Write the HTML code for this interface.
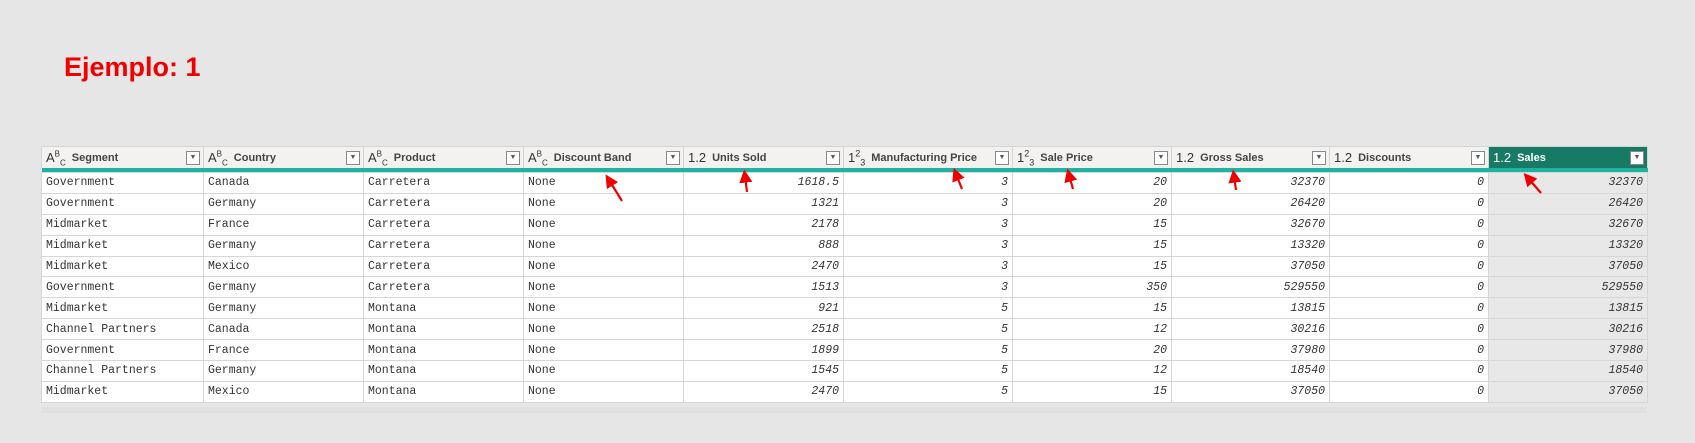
<!DOCTYPE html>
<html><head><meta charset="utf-8"><style>
body{margin:0;width:1695px;height:443px;background:#e6e6e6;position:relative;overflow:hidden;font-family:"Liberation Sans",sans-serif}
.title{position:absolute;left:64px;top:52px;font-size:27px;font-weight:bold;color:#f00000}
.tbl{position:absolute;left:41px;top:146px}
table{border-collapse:collapse;table-layout:fixed}
th{height:21px;background:#f3f2f1;border:1px solid #d4d4d4;border-bottom:none;font-size:11px;font-weight:bold;color:#444;text-align:left;padding:0 4px;white-space:nowrap;position:relative;overflow:hidden}
th .w{display:flex;align-items:center;height:21px}
th .ic{font-weight:normal;font-size:13px;color:#333;margin-right:6px;display:inline-block;line-height:13px}
th .ic sup,th .ic sub{line-height:0}
th .dd{position:absolute;right:3px;top:4px;width:12px;height:12px;border:1px solid #888;background:#fff;font-size:7px;line-height:12px;text-align:center;color:#555}
th.sel{background:#177a64;color:#fff}
th.sel .ic{color:#fff}
tr.teal td{height:4px;padding:0;background:#1eb3a0;border:none}
td{height:19.9px;line-height:19px;border:1px solid #d6d6d6;background:#fff;font-family:"Liberation Mono",monospace;font-size:11.5px;color:#333;padding:0 4px;white-space:nowrap}
td.n{text-align:right;font-style:italic}
td.g{background:#e8e8e8}
.foot{width:1606px;height:6px;background:#e0e0e0;margin-top:4px}
</style></head><body>
<div class="title">Ejemplo: 1</div>
<div class="tbl"><table>
<colgroup><col style="width:162px"><col style="width:160px"><col style="width:160px"><col style="width:160px"><col style="width:160px"><col style="width:169px"><col style="width:159px"><col style="width:158px"><col style="width:159px"><col style="width:159px"></colgroup>
<tr>
<th><div class="w"><span class="ic">A<sup style="font-size:8px">B</sup><sub style="font-size:8px">C</sub></span>Segment</div><span class="dd">▼</span></th>
<th><div class="w"><span class="ic">A<sup style="font-size:8px">B</sup><sub style="font-size:8px">C</sub></span>Country</div><span class="dd">▼</span></th>
<th><div class="w"><span class="ic">A<sup style="font-size:8px">B</sup><sub style="font-size:8px">C</sub></span>Product</div><span class="dd">▼</span></th>
<th><div class="w"><span class="ic">A<sup style="font-size:8px">B</sup><sub style="font-size:8px">C</sub></span>Discount Band</div><span class="dd">▼</span></th>
<th><div class="w"><span class="ic">1.2</span>Units Sold</div><span class="dd">▼</span></th>
<th><div class="w"><span class="ic">1<sup style="font-size:9px">2</sup><sub style="font-size:9px">3</sub></span>Manufacturing Price</div><span class="dd">▼</span></th>
<th><div class="w"><span class="ic">1<sup style="font-size:9px">2</sup><sub style="font-size:9px">3</sub></span>Sale Price</div><span class="dd">▼</span></th>
<th><div class="w"><span class="ic">1.2</span>Gross Sales</div><span class="dd">▼</span></th>
<th><div class="w"><span class="ic">1.2</span>Discounts</div><span class="dd">▼</span></th>
<th class="sel"><div class="w"><span class="ic">1.2</span>Sales</div><span class="dd">▼</span></th>
</tr>
<tr class="teal"><td colspan="10"></td></tr>
<tr><td>Government</td><td>Canada</td><td>Carretera</td><td>None</td><td class="n">1618.5</td><td class="n">3</td><td class="n">20</td><td class="n">32370</td><td class="n">0</td><td class="n g">32370</td></tr>
<tr><td>Government</td><td>Germany</td><td>Carretera</td><td>None</td><td class="n">1321</td><td class="n">3</td><td class="n">20</td><td class="n">26420</td><td class="n">0</td><td class="n g">26420</td></tr>
<tr><td>Midmarket</td><td>France</td><td>Carretera</td><td>None</td><td class="n">2178</td><td class="n">3</td><td class="n">15</td><td class="n">32670</td><td class="n">0</td><td class="n g">32670</td></tr>
<tr><td>Midmarket</td><td>Germany</td><td>Carretera</td><td>None</td><td class="n">888</td><td class="n">3</td><td class="n">15</td><td class="n">13320</td><td class="n">0</td><td class="n g">13320</td></tr>
<tr><td>Midmarket</td><td>Mexico</td><td>Carretera</td><td>None</td><td class="n">2470</td><td class="n">3</td><td class="n">15</td><td class="n">37050</td><td class="n">0</td><td class="n g">37050</td></tr>
<tr><td>Government</td><td>Germany</td><td>Carretera</td><td>None</td><td class="n">1513</td><td class="n">3</td><td class="n">350</td><td class="n">529550</td><td class="n">0</td><td class="n g">529550</td></tr>
<tr><td>Midmarket</td><td>Germany</td><td>Montana</td><td>None</td><td class="n">921</td><td class="n">5</td><td class="n">15</td><td class="n">13815</td><td class="n">0</td><td class="n g">13815</td></tr>
<tr><td>Channel Partners</td><td>Canada</td><td>Montana</td><td>None</td><td class="n">2518</td><td class="n">5</td><td class="n">12</td><td class="n">30216</td><td class="n">0</td><td class="n g">30216</td></tr>
<tr><td>Government</td><td>France</td><td>Montana</td><td>None</td><td class="n">1899</td><td class="n">5</td><td class="n">20</td><td class="n">37980</td><td class="n">0</td><td class="n g">37980</td></tr>
<tr><td>Channel Partners</td><td>Germany</td><td>Montana</td><td>None</td><td class="n">1545</td><td class="n">5</td><td class="n">12</td><td class="n">18540</td><td class="n">0</td><td class="n g">18540</td></tr>
<tr><td>Midmarket</td><td>Mexico</td><td>Montana</td><td>None</td><td class="n">2470</td><td class="n">5</td><td class="n">15</td><td class="n">37050</td><td class="n">0</td><td class="n g">37050</td></tr>
</table><div class="foot"></div></div>
<svg style="position:absolute;left:0;top:0" width="1695" height="443">
<defs><marker id="a" markerWidth="6" markerHeight="6" refX="3" refY="3" orient="auto"><path d="M0,0L6,3L0,6z" fill="#e00"/></marker></defs>
<g stroke="#e00" stroke-width="2.2" marker-end="url(#a)">
<line x1="622" y1="201" x2="609" y2="180"/>
<line x1="747" y1="192" x2="745" y2="176"/>
<line x1="962" y1="189" x2="956" y2="174"/>
<line x1="1073" y1="189" x2="1069" y2="175"/>
<line x1="1236" y1="190" x2="1234" y2="176"/>
<line x1="1541" y1="193" x2="1528" y2="178"/>
</g></svg>
</body></html>
